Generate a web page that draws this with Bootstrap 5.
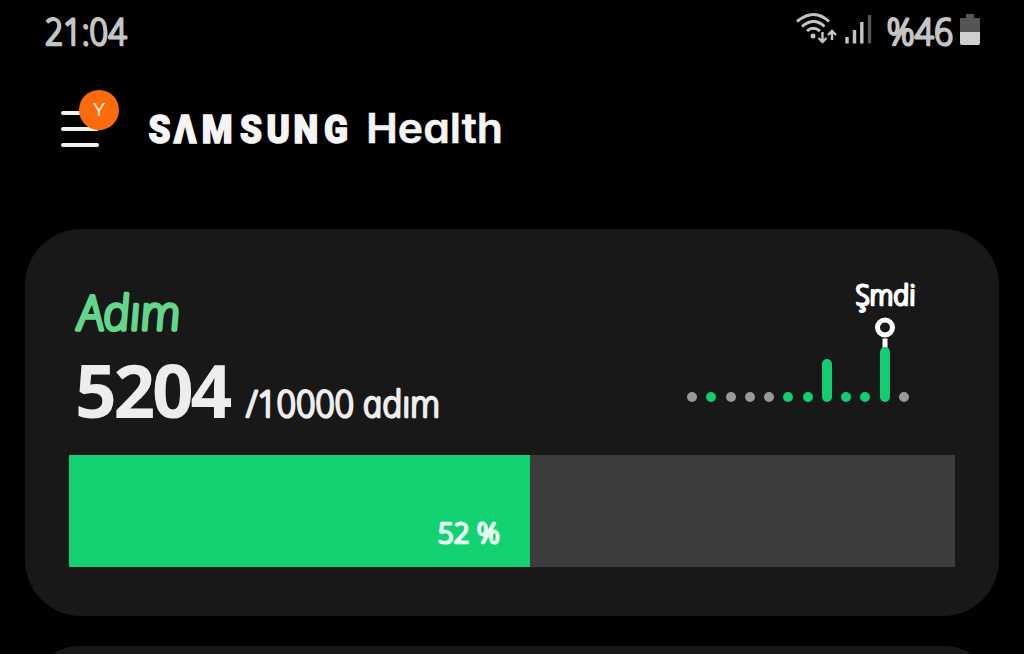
<!DOCTYPE html>
<html lang="tr">
<head>
    <meta charset="UTF-8">
    <meta name="viewport" content="width=device-width, initial-scale=1">
    <title>Samsung Health</title>
    <link href="https://cdn.jsdelivr.net/npm/bootstrap@5.3.0/dist/css/bootstrap.min.css" rel="stylesheet">
    <style>
        body {
          background: #000;
          height: 654px;
          overflow: hidden;
          font-family: "Noto Sans", "Open Sans", sans-serif;
        }
        svg { display: block; flex: none; overflow: visible; }
        .hand {
          font-family: "Open Sans", "Noto Sans", sans-serif;
          font-style: italic;
          font-weight: 300;
          stroke: currentColor;
          fill: currentColor;
          stroke-width: 2.4;
          stroke-linejoin: round;
        }
        .status-bar { height: 60px; padding: 0 43px 0 44px; color: #c4c4c4; }
        .app-bar { height: 169px; padding: 29px 0 0 61px; }
        .menu-btn { width: 58px; height: 60px; padding-top: 22px; }
        .menu-line { width: 38px; height: 4px; border-radius: 2px; background: #f2f2f2; margin-bottom: 12px; }
        .avatar { width: 40px; height: 40px; top: 1px; left: 18px; background: #fb6a0b; color: #ffe9d0; }
        .brand { margin-left: 30px; color: #f5f5f5; }
        .brand-health { font-family: Inter, sans-serif; font-weight: 600; font-feature-settings: "cv11", "ss01"; }
        .panel { margin: 0 25px; border-radius: 56px; background: #181818; }
        .steps-panel { height: 387px; padding: 51px 44px 0; }
        .steps-top { height: 175px; }
        .steps-title { color: #63d68c; margin-left: 8px; }
        .steps-count { margin: 8px 0 0 8px; color: #ededed; }
        .big-count { width: 168px; font: bold 73px/75px "Open Sans", sans-serif; letter-spacing: -3.2px; margin-left: -2px; }
        .chart-box { width: 222px; margin-right: 46px; color: #fff; }
        .bars { height: 55px; }
        .bar { width: 10px; height: 10px; border-radius: 5px; background: #999; }
        .bar.on { background: #12ce70; }
        .bar.mid { height: 43px; }
        .bar.now { height: 55px; }
        .goal { height: 112px; border-radius: 0; background: #3d3d3d; }
        .goal .progress-bar { background: #12d170; color: #e6fff0; padding: 0 29px 18px 0; }
        .next-clip { height: 8px; margin-top: 30px; overflow: hidden; }
        .next-panel { height: 120px; }
    </style>
</head>
<body>
<div class="status-bar d-flex justify-content-between">
    <svg class="hand" width="84" height="60">
        <text transform="translate(2.500 45) skewX(11)" font-size="37" textLength="82" lengthAdjust="spacingAndGlyphs">21:04</text>
    </svg>
    <div class="d-flex">
        <!-- wifi with traffic arrows -->
        <svg width="40" height="60" fill="none" stroke="#c4c4c4" stroke-width="3">
            <path d="M-1 21.500Q16 7.500 31 21.500M4 26.500Q16 16.500 26.500 26.500M9 31Q15 25.500 22 31"/>
            <circle cx="15" cy="36" r="2.500" fill="#c4c4c4" stroke="none"/>
            <path stroke-width="2.400" d="M24.500 32V42M20.500 38L24.500 42L28.500 38M34 40V31.500M30 35L34 31L38 35"/>
        </svg>
        <svg width="50" height="60" stroke-width="3.400">
            <path stroke="#c4c4c4" d="M9 37V43.500M16.500 30V43.500M23.800 22V43.500"/>
            <path stroke="#555" d="M31.500 15V43.500"/>
        </svg>
        <svg class="hand" width="72" height="60">
            <text transform="translate(1 44.500) skewX(11)" font-size="37" textLength="66" lengthAdjust="spacingAndGlyphs">%46</text>
        </svg>
        <svg width="21" height="60">
            <path fill="#555" d="M6 14H14V18H20V32H0V18H6Z"/>
            <path fill="#d0d0d0" d="M0 32H20V43Q20 45 18 45H2Q0 45 0 43Z"/>
        </svg>
    </div>
</div>

<div class="app-bar d-flex">
    <div class="menu-btn position-relative">
        <div class="menu-line"></div>
        <div class="menu-line"></div>
        <div class="menu-line"></div>
        <div class="avatar rounded-circle position-absolute">
            <svg width="40" height="40">
                <text x="14" y="25.500" font-size="18" textLength="12" lengthAdjust="spacingAndGlyphs" fill="currentColor">Y</text>
            </svg>
        </div>
    </div>
    <svg class="brand" width="356" height="70" fill="currentColor">
        <g transform="translate(0 54) scale(.9 1)" stroke="currentColor" stroke-width="1.500">
            <text font-family="Roboto" font-weight="900" font-size="39" x="-.5 27.500 58.500 101 130.500 160.500 194.500">SΛMSUNG</text>
        </g>
        <text class="brand-health" transform="translate(217 54)" font-size="41" stroke="currentColor" stroke-width=".5" textLength="137" lengthAdjust="spacingAndGlyphs">Health</text>
    </svg>
</div>

<div class="panel steps-panel">
    <div class="steps-top d-flex justify-content-between">
        <div>
            <div class="steps-title">
                <svg class="hand" width="104" height="64">
                    <text transform="translate(2 50) skewX(7)" font-size="48" stroke-width="3.600" textLength="103" lengthAdjust="spacingAndGlyphs">Adım</text>
                </svg>
            </div>
            <div class="steps-count d-flex">
                <div class="big-count">5204</div>
                <svg class="hand" width="196" height="75">
                    <text transform="translate(5 65) skewX(11)" font-size="37" textLength="194" lengthAdjust="spacingAndGlyphs">/10000 adım</text>
                </svg>
            </div>
        </div>
        <div class="chart-box">
            <svg width="222" height="67">
                <text class="hand" transform="translate(170 25) skewX(11)" font-size="28" textLength="60" lengthAdjust="spacingAndGlyphs">Şmdi</text>
                <circle cx="198" cy="47.500" r="7.500" fill="none" stroke="#fff" stroke-width="5"/>
                <path stroke="#fff" stroke-width="5" d="M198 58.500V70"/>
            </svg>
            <div class="bars d-flex justify-content-between align-items-end position-relative">
                <div class="bar"></div>
                <div class="bar on"></div>
                <div class="bar"></div>
                <div class="bar"></div>
                <div class="bar"></div>
                <div class="bar on"></div>
                <div class="bar on"></div>
                <div class="bar on mid"></div>
                <div class="bar on"></div>
                <div class="bar on"></div>
                <div class="bar on now"></div>
                <div class="bar"></div>
            </div>
        </div>
    </div>
    <div class="progress goal">
        <div class="progress-bar flex-row justify-content-end align-items-end" role="progressbar" aria-valuenow="52" aria-valuemin="0" aria-valuemax="100" style="width: 52%">
            <svg class="hand" width="64" height="32">
                <text transform="translate(2 26) skewX(11)" font-size="28" textLength="62" lengthAdjust="spacingAndGlyphs">52 %</text>
            </svg>
        </div>
    </div>
</div>
<div class="next-clip">
    <div class="panel next-panel"></div>
</div>

<script src="https://cdn.jsdelivr.net/npm/bootstrap@5.3.0/dist/js/bootstrap.bundle.min.js"></script>
</body>
</html>
